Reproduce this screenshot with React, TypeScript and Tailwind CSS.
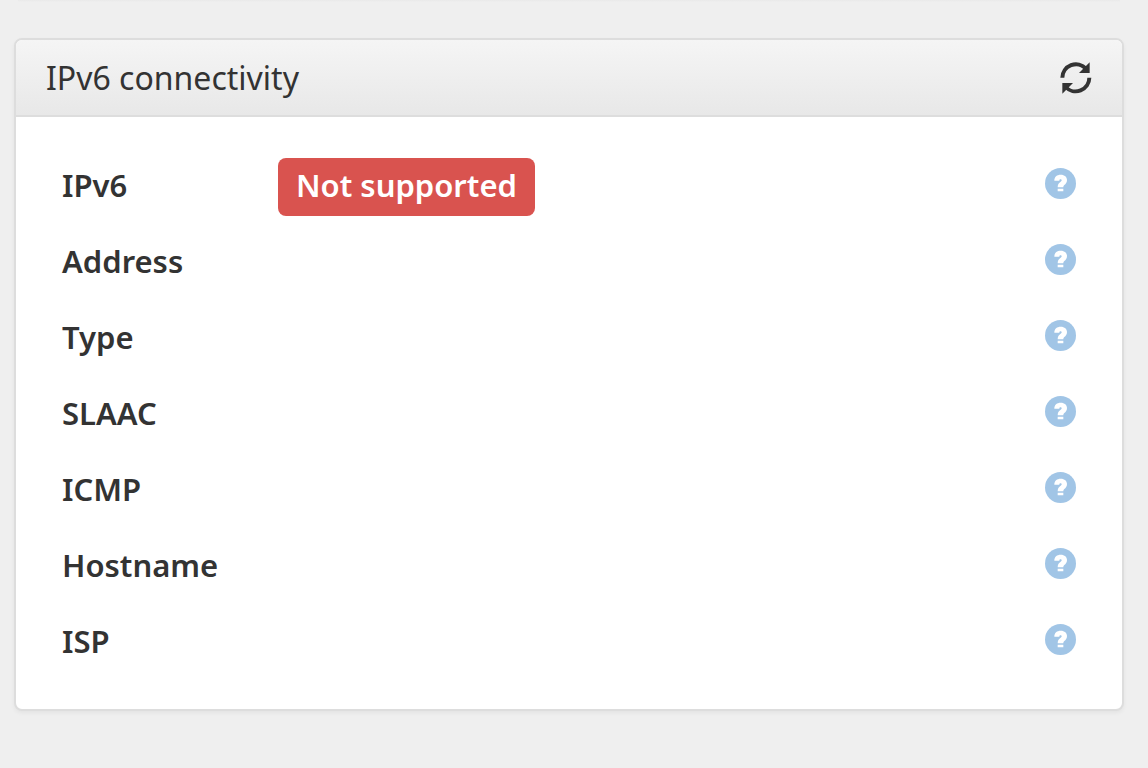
import React, { useState } from 'react';

interface ConnectivityRow {
  label: string;
  status?: string;
}

const rows: ConnectivityRow[] = [
  { label: 'IPv6', status: 'Not supported' },
  { label: 'Address' },
  { label: 'Type' },
  { label: 'SLAAC' },
  { label: 'ICMP' },
  { label: 'Hostname' },
  { label: 'ISP' },
];

const RefreshIcon: React.FC = () => (
  <svg viewBox="0 0 96 96" className="w-8 h-8" aria-hidden="true">
    <g fill="none" stroke="currentColor" strokeWidth="12">
      <path d="M7 47.5A41 41 0 0 1 78 20" />
      <path d="M88 47.5A41 41 0 0 1 17 75" />
    </g>
    <path d="M89 1V33H57ZM7 63H39L7 95Z" fill="currentColor" />
  </svg>
);

const HelpIcon: React.FC = () => (
  <svg viewBox="0 0 93 93" className="w-[31px] h-[31px]" aria-hidden="true">
    <circle cx="46.5" cy="46.5" r="46.5" fill="currentColor" />
    <path
      fill="#fff"
      d="M28 38C28 26 36 20 47 20C59 20 66 27 66 36C66 44 62 48 58 51C56 53 55 54 55 58H38C38 49 41 46 46 42C49 40 50 38 50 36.5C50 35 49 34 47 34C44.5 34 43 35.5 43 38ZM38 62H55V70H38Z"
    />
  </svg>
);

const ConnectivityPanel: React.FC = () => {
  const [checks, setChecks] = useState<number>(0);

  return (
    <section className="border-2 border-[#dddddd] rounded-lg bg-white shadow-[0_2px_4px_rgba(0,0,0,0.05)]">
      <header className="flex items-center justify-between h-[77px] px-[30px] rounded-t-md border-b-2 border-[#dddddd] bg-linear-to-b from-[#f5f5f5] to-[#e8e8e8]">
        <h3 className="text-[32px] leading-10">IPv6 connectivity</h3>
        <button
          type="button"
          aria-label="Refresh"
          onClick={() => setChecks(checks + 1)}
          className="cursor-pointer"
        >
          <RefreshIcon />
        </button>
      </header>
      <div className="pt-8 pb-7 px-[46px]">
        <table className="w-full" key={checks}>
          <tbody>
            {rows.map((row) => (
              <tr key={row.label} className="h-[76px]">
                <th
                  scope="row"
                  className="w-[216px] p-0 pb-1 text-left text-[31px] leading-10 font-semibold"
                >
                  {row.label}
                </th>
                <td className="p-0">
                  {row.status && (
                    <span className="inline-flex items-center h-[58px] px-[18px] pb-1 rounded-lg bg-[#d9534f] text-white text-[31px] leading-10 font-semibold align-middle">
                      {row.status}
                    </span>
                  )}
                </td>
                <td className="w-[31px] p-0 align-middle">
                  <button
                    type="button"
                    aria-label={`Help: ${row.label}`}
                    className="block pb-2 text-[#a1c5e6] cursor-pointer"
                  >
                    <HelpIcon />
                  </button>
                </td>
              </tr>
            ))}
          </tbody>
        </table>
      </div>
    </section>
  );
};

const App: React.FC = () => {
  return (
    <main className="min-h-screen bg-[#efefef] text-[#333333] font-['Noto_Sans',sans-serif] pl-[14px] pr-6">
      {/* shadow of the panel above */}
      <div className="h-0.5 mx-1 bg-linear-to-b from-[#e9e9e9] to-[#efefef]" />
      <div className="pt-9">
        <ConnectivityPanel />
      </div>
    </main>
  );
};

export default App;
